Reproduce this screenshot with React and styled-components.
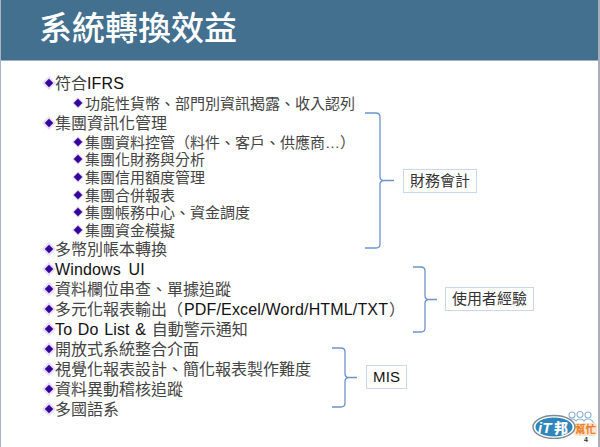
import React from "react";
import styled, { createGlobalStyle } from "styled-components";

const GlobalStyle = createGlobalStyle`
  html, body {
    margin: 0;
    padding: 0;
    background: #fff;
  }
`;

const Slide = styled.div`
  position: relative;
  box-sizing: border-box;
  width: 600px;
  height: 447px;
  overflow: hidden;
  background: #fff;
  border-left: 1px solid #aab5c4;
  border-right: 2px solid #a9aeb9;
  font-family: "Liberation Sans", "Noto Sans CJK TC", sans-serif;
`;

const Header = styled.header`
  box-sizing: border-box;
  height: 61px;
  padding: 3px 0 0 38px;
  background: #43708f;
  border-bottom: 1px solid #9fb1bf;
`;

const Title = styled.h1`
  margin: 0;
  color: #fff;
  font-family: "Noto Sans CJK TC", sans-serif;
  font-size: 33px;
  font-weight: 500;
  line-height: 46px;
`;

const Content = styled.main`
  padding: 12px 0 0 43px;
`;

const Group = styled.section`
  display: flex;
  align-items: flex-start;
`;

const List = styled.div`
  flex: none;
  width: ${({ $width }) => $width}px;
`;

const Row = styled.div`
  display: flex;
  align-items: center;
  height: ${({ $dense }) => ($dense ? 17.6 : 20)}px;
  padding-left: ${({ $sub }) => ($sub ? 29 : 0)}px;
  color: #444;
  font-size: ${({ $sub }) => ($sub ? 15 : 16)}px;
  white-space: nowrap;
`;

const RowText = styled.span`
  margin-top: 2px;
  line-height: 18px;
`;

const Bullet = styled.i`
  flex: none;
  width: 6px;
  height: 6px;
  margin: 0 ${({ $sub }) => ($sub ? 4 : 3)}px 0 2px;
  background: #35009c;
  transform: rotate(45deg);
  box-shadow: ${({ $sub }) =>
    $sub ? "0 0 0 1px #d9cff0" : "0 0 0 2px #e6def8"};
`;

const Latin = styled.span`
  color: #111;
  letter-spacing: 0.15px;
  word-spacing: ${({ $words }) => $words || 0}px;
  margin: 0 ${({ $side }) => $side || 0}px;
`;

const Note = styled.aside`
  display: flex;
  align-items: center;
  margin-top: ${({ $top }) => $top}px;
`;

const Label = styled.div`
  box-sizing: border-box;
  height: 24px;
  margin-left: ${({ $gap }) => $gap}px;
  padding: 0 ${({ $pad }) => $pad}px;
  border: 1px solid #c9d8ef;
  color: #333;
  font-size: 15px;
  line-height: 22px;
  white-space: nowrap;
`;

const BraceLine = styled.svg`
  flex: none;
  display: block;
  fill: none;
  stroke: #6c95cb;
  stroke-width: 1.3;
`;

const LogoMark = styled.svg`
  position: absolute;
  left: 531px;
  top: 409px;
`;

const PageNumber = styled.span`
  position: absolute;
  left: 583px;
  top: 437px;
  color: #333;
  font-size: 7px;
  font-weight: 700;
  line-height: 6px;
`;

function Brace({ width, height, spine }) {
  const mid = height / 2;
  return (
    <BraceLine width={width} height={height} viewBox={`0 0 ${width} ${height}`}>
      <path
        d={`M0 1 H${spine - 4} Q${spine} 1 ${spine} 5 V${mid - 4} Q${spine} ${mid} ${spine + 4} ${mid}
            H${width} M${spine + 4} ${mid} Q${spine} ${mid} ${spine} ${mid + 4} V${height - 5}
            Q${spine} ${height - 1} ${spine - 4} ${height - 1} H0`}
      />
    </BraceLine>
  );
}

function Logo() {
  return (
    <LogoMark width="66" height="30" viewBox="0 0 66 30">
      <g fill="#fff" stroke="#8fb3d3" strokeWidth="1.1">
        <circle cx="40" cy="6" r="3" />
        <circle cx="48" cy="5.5" r="3" />
        <circle cx="56" cy="6" r="3" />
        <path d="M35 15 q1 -5 5 -5 q3 0 4 2 q1 -2 4 -2 q3 0 4 2 q1 -2 4 -2 q5 0 6 6" />
      </g>
      <rect x="42" y="14" width="23" height="13" rx="3" fill="#fbe3cc" />
      <ellipse cx="22" cy="18" rx="21" ry="11.5" fill="#fff" stroke="#7d8a94" strokeWidth="1.4" />
      <ellipse cx="22" cy="18" rx="18.5" ry="9.5" fill="#2f86bb" />
      <text
        x="6"
        y="24"
        fill="#fff"
        fontFamily="Liberation Sans, sans-serif"
        fontSize="15"
        fontStyle="italic"
        fontWeight="700"
      >
        iT
      </text>
      <text
        x="22"
        y="24"
        fill="#fff"
        fontFamily="Noto Sans CJK TC, sans-serif"
        fontSize="14"
        fontWeight="900"
      >
        邦
      </text>
      <text
        x="43"
        y="23.5"
        fill="#ea7f24"
        fontFamily="Noto Sans CJK TC, sans-serif"
        fontSize="10.5"
        fontWeight="700"
      >
        幫忙
      </text>
    </LogoMark>
  );
}

const Item = ({ sub, dense, children }) => (
  <Row $sub={sub} $dense={dense}>
    <Bullet $sub={sub} />
    <RowText>{children}</RowText>
  </Row>
);

const App = () => (
  <Slide>
    <GlobalStyle />
    <Header>
      <Title>系統轉換效益</Title>
    </Header>
    <Content>
      <Group>
        <List $width={321}>
          <Item>
            符合<Latin>IFRS</Latin>
          </Item>
          <Item sub>功能性貨幣、部門別資訊揭露、收入認列</Item>
          <Item>集團資訊化管理</Item>
          <Item sub dense>集團資料控管（料件、客戶、供應商…）</Item>
          <Item sub dense>集團化財務與分析</Item>
          <Item sub dense>集團信用額度管理</Item>
          <Item sub dense>集團合併報表</Item>
          <Item sub dense>集團帳務中心、資金調度</Item>
          <Item sub dense>集團資金模擬</Item>
          <Item>多幣別帳本轉換</Item>
        </List>
        <Note $top={39}>
          <Brace width={29} height={137} spine={15} />
          <Label $gap={9} $pad={6}>財務會計</Label>
        </Note>
      </Group>
      <Group>
        <List $width={369}>
          <Item>
            <Latin $words={3}>Windows UI</Latin>
          </Item>
          <Item>資料欄位串查、單據追蹤</Item>
          <Item>
            多元化報表輸出（<Latin $side={1}>PDF/Excel/Word/HTML/TXT</Latin>）
          </Item>
          <Item>
            <Latin $words={1}>To Do List &amp; </Latin>自動警示通知
          </Item>
        </List>
        <Note $top={7}>
          <Brace width={24} height={67} spine={12} />
          <Label $gap={8} $pad={6}>使用者經驗</Label>
        </Note>
      </Group>
      <Group>
        <List $width={288}>
          <Item>開放式系統整合介面</Item>
          <Item>視覺化報表設計、簡化報表製作難度</Item>
          <Item>資料異動稽核追蹤</Item>
          <Item>多國語系</Item>
        </List>
        <Note $top={8}>
          <Brace width={25} height={61} spine={13} />
          <Label $gap={9} $pad={6}>
            <Latin>MIS</Latin>
          </Label>
        </Note>
      </Group>
    </Content>
    <Logo />
    <PageNumber>4</PageNumber>
  </Slide>
);

export default App;
